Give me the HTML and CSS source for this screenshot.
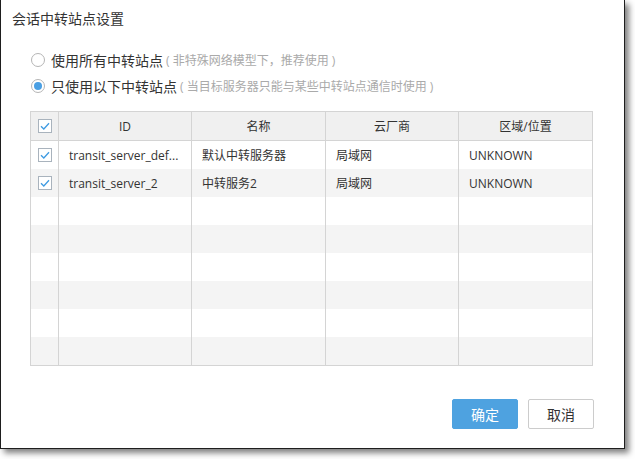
FILE: index.html
```html
<!DOCTYPE html>
<html lang="zh">
<head>
<meta charset="utf-8">
<title>会话中转站点设置</title>
<link rel="stylesheet" href="styles.css">
</head>
<body>
<div class="window">
  <div class="title">会话中转站点设置</div>
  <div class="options">
    <div class="opt"><span class="radio"></span><span class="lbl">使用所有中转站点</span><span class="hint">( 非特殊网络模型下，推荐使用 )</span></div>
    <div class="opt"><span class="radio on"></span><span class="lbl">只使用以下中转站点</span><span class="hint">( 当目标服务器只能与某些中转站点通信时使用 )</span></div>
  </div>
  <div class="grid">
    <div class="row head">
      <div class="cell chk"><span class="cb"><svg viewBox="0 0 14 14" width="14" height="14"><path d="M3 7.2 L5.8 10 L11 4.2" fill="none" stroke="#3f9be2" stroke-width="1.3"/></svg></span></div>
      <div class="cell">ID</div>
      <div class="cell">名称</div>
      <div class="cell">云厂商</div>
      <div class="cell">区域/位置</div>
    </div>
    <div class="row">
      <div class="cell chk"><span class="cb"><svg viewBox="0 0 14 14" width="14" height="14"><path d="M3 7.2 L5.8 10 L11 4.2" fill="none" stroke="#3f9be2" stroke-width="1.3"/></svg></span></div>
      <div class="cell">transit_server_def...</div>
      <div class="cell">默认中转服务器</div>
      <div class="cell">局域网</div>
      <div class="cell">UNKNOWN</div>
    </div>
    <div class="row">
      <div class="cell chk"><span class="cb"><svg viewBox="0 0 14 14" width="14" height="14"><path d="M3 7.2 L5.8 10 L11 4.2" fill="none" stroke="#3f9be2" stroke-width="1.3"/></svg></span></div>
      <div class="cell">transit_server_2</div>
      <div class="cell">中转服务2</div>
      <div class="cell">局域网</div>
      <div class="cell">UNKNOWN</div>
    </div>
    <div class="row"><div class="cell chk"></div><div class="cell"></div><div class="cell"></div><div class="cell"></div><div class="cell"></div></div>
    <div class="row"><div class="cell chk"></div><div class="cell"></div><div class="cell"></div><div class="cell"></div><div class="cell"></div></div>
    <div class="row"><div class="cell chk"></div><div class="cell"></div><div class="cell"></div><div class="cell"></div><div class="cell"></div></div>
    <div class="row"><div class="cell chk"></div><div class="cell"></div><div class="cell"></div><div class="cell"></div><div class="cell"></div></div>
    <div class="row"><div class="cell chk"></div><div class="cell"></div><div class="cell"></div><div class="cell"></div><div class="cell"></div></div>
    <div class="row"><div class="cell chk"></div><div class="cell"></div><div class="cell"></div><div class="cell"></div><div class="cell"></div></div>
  </div>
  <div class="actions">
    <button class="btn primary">确定</button>
    <button class="btn">取消</button>
  </div>
</div>
</body>
</html>
```

FILE: styles.css
```css
* { box-sizing: border-box; }
html, body { margin: 0; padding: 0; background: #fff; }
body {
  font-family: "Open Sans", "Noto Sans CJK SC", sans-serif;
  color: #333;
  width: 635px;
  height: 459px;
  overflow: hidden;
}
.window {
  width: 625px;
  height: 449px;
  background: #fff;
  border-left: 1px solid #1e1e1e;
  border-right: 1px solid #1e1e1e;
  border-bottom: 1px solid #1e1e1e;
  box-shadow: 4px 4px 6px rgba(0,0,0,0.5);
}
.title {
  padding: 9px 0 0 11px;
  height: 29px;
  font-size: 14px;
  line-height: 20px;
  color: #333;
}
.options {
  margin-top: 18px;
  padding-left: 30px;
}
.opt {
  display: flex;
  align-items: center;
  height: 26px;
}
.radio {
  width: 14px;
  height: 14px;
  border: 1px solid #b5b5b5;
  border-radius: 50%;
  background: #fff;
  margin-right: 6px;
  display: flex;
  align-items: center;
  justify-content: center;
}
.radio.on::after {
  content: "";
  width: 8px;
  height: 8px;
  border-radius: 50%;
  background: #4a9fe3;
}
.lbl {
  font-size: 14px;
  color: #333;
}
.hint {
  font-size: 12px;
  color: #aaa;
  margin-left: 3px;
}
.grid {
  margin: 12px 0 0 29px;
  width: 563px;
  border: 1px solid #d4d4d4;
  font-size: 12px;
}
.row {
  display: grid;
  grid-template-columns: 27px 133px 134px 133px 134px;
  height: 28px;
}
.row:nth-child(odd) { background: #f4f4f4; }
.row.head {
  background: #f0f0f0;
  height: 29px;
  border-bottom: 1px solid #d4d4d4;
}
.cell {
  display: flex;
  align-items: center;
  padding-left: 10px;
  border-left: 1px solid #d4d4d4;
  color: #333;
  white-space: nowrap;
  overflow: hidden;
}
.head .cell { justify-content: center; padding-left: 0; }
.cell.chk { border-left: none; padding-left: 0; justify-content: center; }
.cb {
  width: 14px;
  height: 14px;
  border: 1px solid #a9b3bd;
  background: #fff;
  display: block;
  position: relative;
}
.cb svg { position: absolute; left: -1px; top: -1px; }
.actions {
  display: flex;
  justify-content: flex-end;
  gap: 10px;
  margin-top: 33px;
  padding-right: 30px;
}
.btn {
  width: 66px;
  height: 30px;
  border: 1px solid #ccc;
  border-radius: 2px;
  background: #fff;
  color: #333;
  font-family: "Noto Sans CJK SC", sans-serif;
  font-size: 14px;
  padding: 0;
}
.btn.primary {
  background: #4ea2e0;
  border-color: #4ea2e0;
  color: #fff;
}
```
